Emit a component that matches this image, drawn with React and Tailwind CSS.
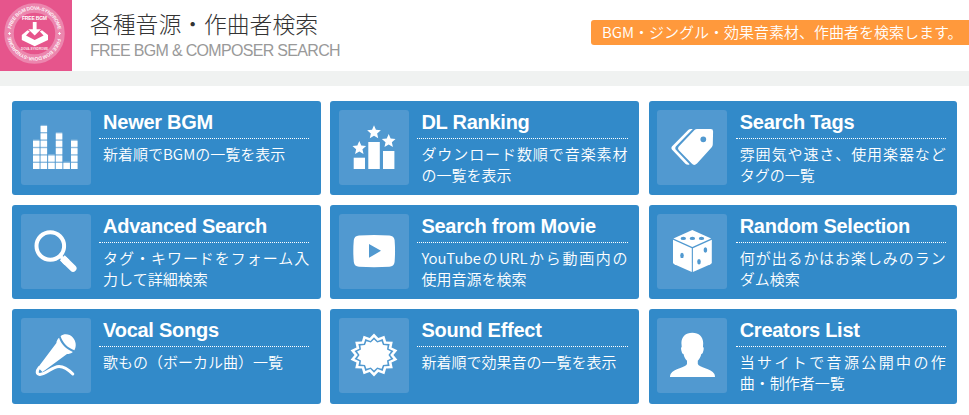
import React from 'react';

const starPoints = (cx, cy, rx, ry, inner, count, offset = -Math.PI / 2) =>
  Array.from({ length: count * 2 }, (_, i) => {
    const k = i % 2 ? inner : 1;
    const a = offset + (i * Math.PI) / count;
    return `${(cx + rx * k * Math.cos(a)).toFixed(2)},${(cy + ry * k * Math.sin(a)).toFixed(2)}`;
  }).join(' ');

const TILE = '#5199d0';

const Equalizer = () => (
  <>
    {[4, 6, 2, 5, 1, 4].map((n, c) => (
      <g key={c}>
        <rect x={12 + c * 7.6} y={59 - n * 7.35} width="6.5" height={n * 7.35} fillOpacity="0.35" />
        {Array.from({ length: n }, (_, r) => (
          <rect key={r} x={12 + c * 7.6} y={59 - 6 - r * 7.4} width="6.5" height="6" />
        ))}
      </g>
    ))}
  </>
);

const Ranking = () => (
  <>
    <rect x="14.7" y="47.7" width="11.3" height="11.3" />
    <rect x="29.3" y="32" width="11.5" height="27" />
    <rect x="44" y="41" width="11.4" height="18" />
    <polygon points={starPoints(20.3, 38.2, 7.2, 7.2, 0.46, 5)} />
    <polygon points={starPoints(35, 22.4, 7.2, 7.2, 0.46, 5)} />
    <polygon points={starPoints(49.7, 31.3, 7.2, 7.2, 0.46, 5)} />
  </>
);

const Tags = () => (
  <>
    <path d="M35.8 19H33.8Q32.3 19 31.2 20.1L14.9 36.6Q13.7 38.2 14.9 39.6L28.4 53.7Q29.6 55 31.8 54.8L32.6 54.3L18.6 39.6Q17.8 38.2 18.8 36.6Z" />
    <path fillRule="evenodd" d="M40 19H53.8Q56.2 19 56.1 21.4L55.8 34.2Q55.8 36 54.5 37.4L40 53.5Q37.2 56.2 34.7 53.6L21.6 40Q20.4 38.4 21.6 36.8L37.5 20.1Q38.6 19 40 19ZM46.3 26.4A2.9 2.9 0 1 0 46.3 32.2A2.9 2.9 0 1 0 46.3 26.4Z" />
  </>
);

const Magnifier = () => (
  <>
    <circle cx="29.3" cy="32" r="13.8" fill="none" stroke="white" strokeWidth="4" />
    <path d="M38.5 41.5L41.5 44.3" stroke="white" strokeWidth="3.4" />
    <path d="M44 46.5L52 54.2" stroke="white" strokeWidth="7" strokeLinecap="round" />
    <path d="M41.3 43.8L46 48.4" stroke="white" strokeWidth="7" />
  </>
);

const Video = () => (
  <path fillRule="evenodd" d="M20 21.4Q35 20.6 50.4 21.4Q55 21.8 55.6 26Q56.5 37 55.6 48Q55 52.4 50.4 52.8Q35 53.5 20 52.8Q15.4 52.4 14.8 48Q13.8 37 14.8 26Q15.4 21.8 20 21.4ZM30 30V43.8L42 36.8Z" />
);

const Dice = () => (
  <>
    <path d="M35.3 16L54.2 24.4L35.3 33L16.4 24.4Z" />
    <path d="M16 25.7L34.8 34.2V58L17.3 50.2Q16 49.6 16 48.2Z" />
    <path d="M54.8 25.7L35.9 34.2V58L53.5 50.2Q54.8 49.6 54.8 48.2Z" />
    <g fill={TILE}>
      <ellipse cx="26.3" cy="24.4" rx="2.7" ry="1.6" />
      <ellipse cx="35.4" cy="24.4" rx="2.7" ry="1.6" />
      <ellipse cx="44.5" cy="24.4" rx="2.7" ry="1.6" />
      <ellipse cx="25" cy="41.4" rx="1.8" ry="2.7" />
      <ellipse cx="48.4" cy="36" rx="1.8" ry="2.7" />
      <ellipse cx="42" cy="47.8" rx="1.8" ry="2.7" />
    </g>
  </>
);

const Mic = () => (
  <>
    <path d="M39.6 18.2C43 15.2 48.6 15.8 51.8 19.4C55.2 23 55.6 28.4 53.4 32.2C47.2 30.2 41.4 24.6 39.6 18.2Z" />
    <path d="M38.1 19.8C39.7 25.8 45.5 31.6 51.9 33.9C50.2 35.3 48 36 46 36L21.5 54L17 49.5L35.4 25C35.5 23 36.5 21.2 38.1 19.8Z" />
    <path d="M18.2 49.6C15.4 53 15.5 56.3 18.8 56.4C25.5 56.6 30.5 48.6 38 48.4C43.6 48.3 47.2 51.3 51.8 56" fill="none" stroke="white" strokeWidth="3" strokeLinecap="round" />
  </>
);

const Burst = () => (
  <>
    <polygon points={starPoints(35, 37, 24, 21.4, 0.81, 14)} />
    <polygon points={starPoints(35, 37, 20, 17.8, 0.81, 14)} fill={TILE} />
    <polygon points={starPoints(35, 37, 17.4, 15.4, 0.83, 14)} />
  </>
);

const Person = () => (
  <path d="M35.3 14.7C42 14.7 46 18.5 46.2 25L46 28.7Q47.2 29.5 46.6 32L45.8 34.7Q45.2 36 44.3 36C43.6 39.2 42.2 41.4 40.8 42.8V46C42 49.5 54 50.4 57.4 56Q58 57.3 58 59H13Q13 57.3 13.6 56C17 50.4 28.8 49.5 30 46V42.8C28.4 41.4 27.2 39.2 26.5 36Q25.5 36 25 34.7L24.2 32Q23.6 29.5 24.7 28.7L24.4 25C24.6 18.5 28.6 14.7 35.3 14.7Z" />
);

const cards = [
  { title: 'Newer BGM', text: '新着順でBGMの一覧を表示', Icon: Equalizer },
  { title: 'DL Ranking', text: 'ダウンロード数順で音楽素材の一覧を表示', Icon: Ranking },
  { title: 'Search Tags', text: '雰囲気や速さ、使用楽器などタグの一覧', Icon: Tags },
  { title: 'Advanced Search', text: 'タグ・キワードをフォーム入力して詳細検索', Icon: Magnifier },
  { title: 'Search from Movie', text: 'YouTubeのURLから動画内の使用音源を検索', Icon: Video },
  { title: 'Random Selection', text: '何が出るかはお楽しみのランダム検索', Icon: Dice },
  { title: 'Vocal Songs', text: '歌もの（ボーカル曲）一覧', Icon: Mic },
  { title: 'Sound Effect', text: '新着順で効果音の一覧を表示', Icon: Burst },
  { title: 'Creators List', text: '当サイトで音源公開中の作曲・制作者一覧', Icon: Person },
];

function Seal() {
  return (
    <svg viewBox="0 0 72 71" className="h-[71px] w-[72px] shrink-0 bg-[#e6558c] font-['Liberation_Sans',sans-serif]">
      <circle cx="34.5" cy="33.5" r="25.5" fill="none" stroke="#ec86ae" strokeWidth="9.5" />
      <defs>
        <path id="ring" d="M10.7 33.5A23.8 23.8 0 0 1 58.3 33.5A23.8 23.8 0 0 1 10.7 33.5" />
      </defs>
      <g fill="white" fontWeight="bold">
        <text fontSize="5" fillOpacity="0.9">
          <textPath href="#ring" startOffset="4.5" textLength="66">FREE BGM DOVA-SYNDROME</textPath>
        </text>
        <text fontSize="5" fillOpacity="0.9">
          <textPath href="#ring" startOffset="79.3" textLength="66">FREE BGM DOVA-SYNDROME</textPath>
        </text>
        <text x="34.5" y="19.6" fontSize="5" textAnchor="middle" textLength="25">FREE BGM</text>
        <text x="34.5" y="50.4" fontSize="3" textAnchor="middle" textLength="27" fillOpacity="0.85">DOVA-SYNDROME</text>
        <path d="M9.5 32.2v2.6M8.2 33.5h2.6M59.5 32.2v2.6M58.2 33.5h2.6" stroke="white" strokeWidth="1" />
        <path d="M32.8 22H36.6V29.3H41L34.7 35.5L28.3 29.3H32.8Z" />
        <path fillRule="evenodd" d="M27.5 30.2L21.8 35V40L34.7 46.2L48 40V35L42 30.2L39.8 31.6L43.6 35.4L34.7 39.9L26 35.4L29.8 31.6Z" />
      </g>
    </svg>
  );
}

function Card({ title, text, Icon }) {
  return (
    <a className="flex rounded-[3px] bg-[#328ac9] pt-[9px] pr-[11.3px] pl-[8.8px] text-white">
      <svg viewBox="0 0 70 75" fill="white" className="h-[75px] w-[70px] shrink-0 rounded-[3px] bg-[#5199d0]">
        <Icon />
      </svg>
      <div className="ml-[8.3px] min-w-0 flex-1">
        <h2 className="h-[29px] border-b border-dotted border-white pl-1 font-['Liberation_Sans',Arial,sans-serif] text-[20px] leading-6 font-bold tracking-[-0.26px] whitespace-nowrap">
          {title}
        </h2>
        <p className="mt-1 pl-1 text-justify text-[15px] leading-[21px] font-[350]">{text}</p>
      </div>
    </a>
  );
}

export default function App() {
  return (
    <div className="h-[415px] w-[969px] overflow-hidden bg-white font-['Noto_Sans_CJK_JP',sans-serif]" lang="ja">
      <header className="flex h-[71px] items-start">
        <Seal />
        <div className="ml-[18px] pt-[9px]">
          <h1 className="text-[22.8px] leading-[30px] font-light text-[#333]">各種音源・作曲者検索</h1>
          <p className="mt-0.5 font-['Liberation_Sans',Arial,sans-serif] text-[16px] leading-5 tracking-[-0.68px] text-[#999]">
            FREE BGM &amp; COMPOSER SEARCH
          </p>
        </div>
        <p className="mt-5 ml-auto h-[25px] w-[378px] rounded-l-[3px] bg-[#ff993c] pl-[11px] text-[15px] leading-[24px] font-[350] whitespace-nowrap text-white">
          BGM・ジングル・効果音素材、作曲者を検索します。
        </p>
      </header>
      <div className="h-[15px] bg-[#f0f2f1]" />
      <main className="mt-[15px] ml-3 grid w-[945.1px] grid-cols-3 grid-rows-[94px_94px_95px] gap-x-[9.8px] gap-y-2.5">
        {cards.map((card) => (
          <Card key={card.title} {...card} />
        ))}
      </main>
    </div>
  );
}
